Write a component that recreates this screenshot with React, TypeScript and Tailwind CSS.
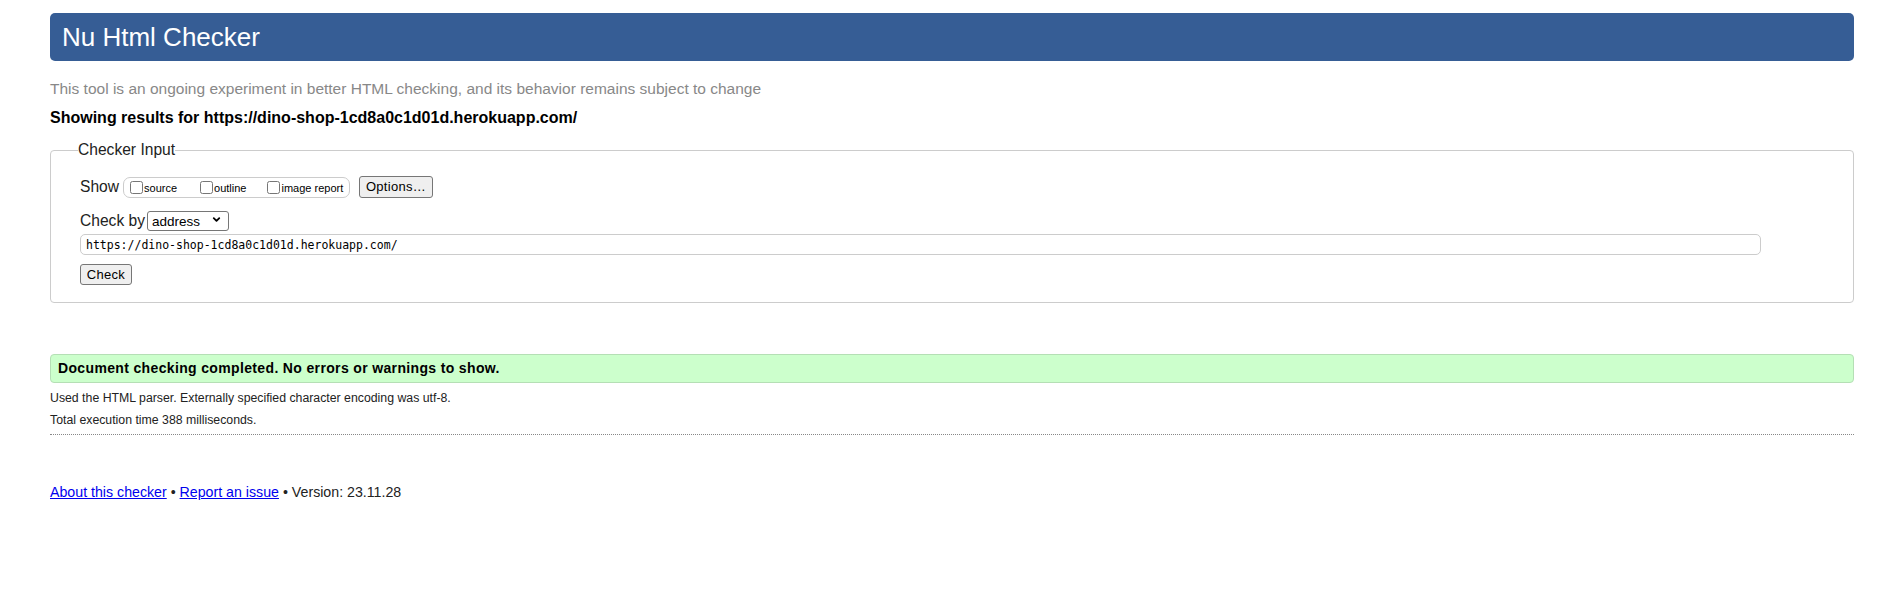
import React from "react";
import { ChevronDown } from "lucide-react";

const url = "https://dino-shop-1cd8a0c1d01d.herokuapp.com/";

export default function App() {
  return (
    <div className="min-h-screen bg-white pl-[50px] pr-[49px] pt-[13px] text-black font-['Liberation_Sans',Arial,sans-serif]">
      {/* title bar */}
      <h1 className="flex h-[48px] items-center rounded-[5px] bg-[#365d95] pl-[12px] text-[26px] font-normal text-white">
        Nu Html Checker
      </h1>

      <p className="mt-[19px] text-[15.5px] leading-[18px] text-[#888888]">
        This tool is an ongoing experiment in better HTML checking, and its behavior remains subject to change
      </p>

      <p className="mt-[11px] text-[16px] font-bold leading-[18px]">Showing results for {url}</p>

      {/* checker input */}
      <fieldset className="mt-[14px] rounded-[4px] border border-[#cccccc] pb-[17px] pl-[29px] pr-[29px] pt-[17px]">
        <legend className="-ml-[2px] px-0 text-[15.6px] leading-[18px] text-[#222]">Checker Input</legend>

        <div className="flex h-[22px] items-center">
          <span className="text-[15.6px] text-[#222]">Show</span>
          <div className="ml-[4px] flex h-[21px] w-[227px] items-center rounded-[7px] border border-[#cccccc] pl-[3px]">
            <label className="flex items-center text-[11px]">
              <input type="checkbox" className="m-[3px] mr-[1px] size-[13px]" />
              <span className="mt-[2px]">source</span>
            </label>
            <label className="ml-[20px] flex items-center text-[11px]">
              <input type="checkbox" className="m-[3px] mr-[1px] size-[13px]" />
              <span className="mt-[2px]">outline</span>
            </label>
            <label className="ml-[18px] flex items-center text-[11px]">
              <input type="checkbox" className="m-[3px] mr-[1px] size-[13px]" />
              <span className="mt-[2px]">image report</span>
            </label>
          </div>
          <button className="ml-[9px] h-[22px] w-[74px] rounded-[3px] border border-[#767676] bg-[#efefef] text-[13px] tracking-[0.3px]">
            Options…
          </button>
        </div>

        <div className="mt-[13px] flex h-[20px] items-center">
          <span className="text-[15.6px] text-[#222]">Check by</span>
          <div className="relative ml-[2px]">
            <select className="h-[20px] w-[82px] appearance-none rounded-[3px] border border-[#767676] bg-white pl-[4px] text-[13.5px]">
              <option>address</option>
            </select>
            <ChevronDown
              size={11}
              strokeWidth={4}
              className="pointer-events-none absolute right-[7px] top-[5px] text-black"
            />
          </div>
        </div>

        <input
          type="text"
          readOnly
          value={url}
          className="mt-[3px] block h-[21px] w-[1681px] rounded-[5px] border border-[#cccccc] px-[5px] font-['DejaVu_Sans_Mono',monospace] text-[11.5px]"
        />

        <button className="mt-[9px] block h-[21px] w-[52px] rounded-[3px] border border-[#767676] bg-[#efefef] text-[13px] tracking-[0.3px]">
          Check
        </button>
      </fieldset>

      {/* result */}
      <div className="mt-[51px] flex h-[29px] items-center rounded-[4px] border border-[#b5dfb5] bg-[#ccffcc] pl-[7px] text-[14px] font-bold tracking-[0.35px]">
        Document checking completed. No errors or warnings to show.
      </div>

      <div className="mt-[4px] border-b border-dotted border-[#888888] pb-[3px] text-[12.3px] leading-[22px] text-[#222]">
        <p>Used the HTML parser. Externally specified character encoding was utf-8.</p>
        <p>Total execution time 388 milliseconds.</p>
      </div>

      <p className="mt-[48px] text-[14.2px] leading-[18px] text-[#222]">
        <a href="#" className="text-[#0000ee] underline">
          About this checker
        </a>{" "}
        •{" "}
        <a href="#" className="text-[#0000ee] underline">
          Report an issue
        </a>{" "}
        • Version: 23.11.28
      </p>
    </div>
  );
}
